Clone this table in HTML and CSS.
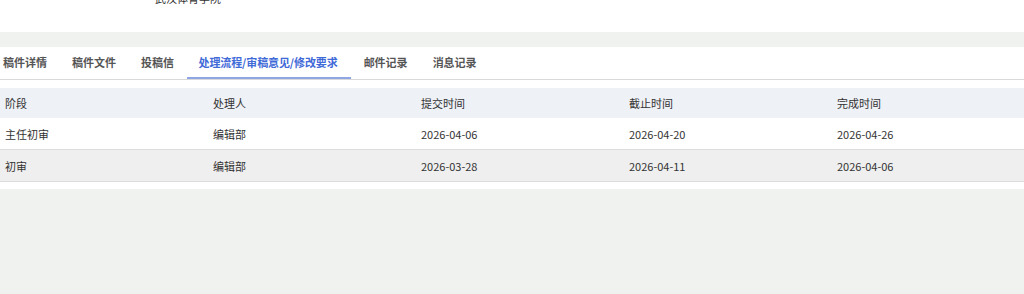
FILE: index.html
```html
<!DOCTYPE html>
<html lang="zh-CN">
<head>
  <meta charset="UTF-8" />
  <meta name="viewport" content="width=device-width, initial-scale=1.0" />
  <title>稿件处理流程</title>
  <link rel="stylesheet" href="styles.css">
</head>
<body>
  <div class="info">
    <div class="org">武汉体育学院</div>
  </div>

  <div class="panel">
    <ul class="tabs">
      <li>稿件详情</li>
      <li>稿件文件</li>
      <li>投稿信</li>
      <li class="active">处理流程/审稿意见/修改要求</li>
      <li>邮件记录</li>
      <li>消息记录</li>
    </ul>

    <table class="flow">
      <thead>
        <tr>
          <th>阶段</th>
          <th>处理人</th>
          <th>提交时间</th>
          <th>截止时间</th>
          <th>完成时间</th>
        </tr>
      </thead>
      <tbody>
        <tr>
          <td>主任初审</td>
          <td>编辑部</td>
          <td>2026-04-06</td>
          <td>2026-04-20</td>
          <td>2026-04-26</td>
        </tr>
        <tr class="hover">
          <td>初审</td>
          <td>编辑部</td>
          <td>2026-03-28</td>
          <td>2026-04-11</td>
          <td>2026-04-06</td>
        </tr>
      </tbody>
    </table>
  </div>
</body>
</html>
```

FILE: styles.css
```css
body {
  margin: 0;
  background: #f0f2f0;
  color: #333;
  font-family: "Microsoft YaHei", "Noto Sans CJK SC", "Noto Sans", sans-serif;
  font-size: 11px;
  overflow: hidden;
}
.info {
  background: #fff;
  height: 32px;
  margin-bottom: 15px;
  overflow: hidden;
}
.org {
  margin-top: -9px;
  padding-left: 155px;
  line-height: 14px;
  color: #333;
}
.panel {
  background: #fff;
  width: 1040px;
  padding-bottom: 7px;
}
.tabs {
  list-style: none;
  margin: 0 0 8px;
  padding: 0;
  display: flex;
  height: 32px;
  border-bottom: 1px solid #d9d9d9;
}
.tabs li {
  padding: 0 12.5px;
  line-height: 31px;
  color: #555;
  font-weight: 600;
  border-bottom: 2px solid transparent;
}
.tabs li:first-child {
  margin-left: -9.5px;
}
.tabs li.active {
  color: #3f6ad8;
  border-bottom-color: #8ea6e4;
  padding: 0 13.5px 0 12px;
  letter-spacing: -0.1px;
}
.flow {
  width: 1040px;
  border-collapse: collapse;
  table-layout: fixed;
}
.flow th,
.flow td {
  text-align: left;
  font-weight: normal;
  padding: 0 5px;
  color: #333;
}
.flow th {
  background: #eef1f5;
  height: 30px;
}
.flow td {
  height: 31px;
  border-bottom: 1px solid #dcdcdc;
}
.flow tr.hover td {
  background: #efefef;
}
```
